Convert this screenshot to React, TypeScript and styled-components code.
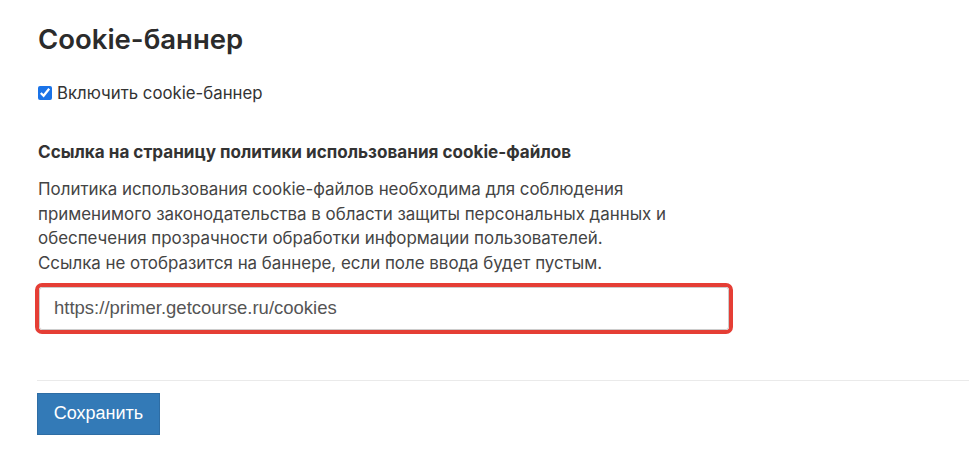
import React from "react";
import styled, { createGlobalStyle } from "styled-components";

const Global = createGlobalStyle`
  html, body { margin: 0; padding: 0; background: #fff; }
  body { font-family: Inter, "Noto Sans", sans-serif; color: #333; }
  * { box-sizing: border-box; }
`;

const Page = styled.div`
  padding: 20px 0 0 37px;
  width: 969px;
`;

const Title = styled.h2`
  margin: 0 0 0 1px;
  font-size: 27.5px;
  font-weight: 600;
  line-height: 38px;
  color: #2b2b2b;
`;

const CheckRow = styled.label`
  display: flex;
  align-items: center;
  gap: 5px;
  margin-top: 25px;
  margin-left: 1px;
  font-size: 16.8px;
  line-height: 20px;
  color: #333;
`;

const Check = styled.input`
  width: 14px;
  height: 14px;
  margin: 0;
  accent-color: #1a73e8;
`;

const Section = styled.div`
  margin-top: 37px;
  margin-left: 1px;
`;

const Label = styled.div`
  font-size: 17.1px;
  font-weight: 700;
  line-height: 24px;
  color: #333;
`;

const Help = styled.p`
  margin: 13px 0 0;
  font-size: 16.9px;
  line-height: 24.7px;
  color: #444;
  width: 660px;
`;

const Highlight = styled.div`
  margin: 7px 0 0 -3px;
  width: 698px;
  height: 51px;
  border: 4px solid #e53e35;
  border-radius: 7px;
  padding: 0;
  overflow: hidden;
`;

const Input = styled.input`
  width: 100%;
  height: 100%;
  border: 1px solid #ccc;
  border-radius: 3px;
  padding: 0 14px;
  font-family: "Liberation Sans", Arial, sans-serif;
  font-size: 18.5px;
  color: #555;
  outline: none;
`;

const Divider = styled.hr`
  margin: 46px 0 0;
  border: 0;
  border-top: 1px solid #eaeaea;
`;

const Button = styled.button`
  margin-top: 12px;
  width: 123px;
  height: 42px;
  background: #337ab7;
  border: 1px solid #2e6da4;
  border-radius: 0;
  color: #fff;
  font-family: "Liberation Sans", Arial, sans-serif;
  font-size: 18px;
  padding: 0;
`;

export default function App() {
  return (
    <>
      <Global />
      <Page>
        <Title>Cookie-баннер</Title>
        <CheckRow>
          <Check type="checkbox" defaultChecked />
          Включить cookie-баннер
        </CheckRow>
        <Section>
          <Label>Ссылка на страницу политики использования cookie-файлов</Label>
          <Help>
            Политика использования cookie-файлов необходима для соблюдения
            <br />
            применимого законодательства в области защиты персональных данных и
            <br />
            обеспечения прозрачности обработки информации пользователей.
            <br />
            Ссылка не отобразится на баннере, если поле ввода будет пустым.
          </Help>
          <Highlight>
            <Input defaultValue="https://primer.getcourse.ru/cookies" />
          </Highlight>
        </Section>
        <Divider />
        <Button>Сохранить</Button>
      </Page>
    </>
  );
}
